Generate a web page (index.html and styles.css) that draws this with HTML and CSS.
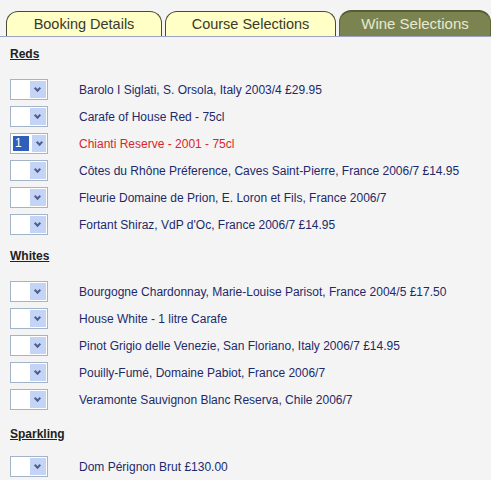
FILE: index.html
```html
<!DOCTYPE html>
<html lang="en">
<head>
<meta charset="UTF-8" />
<title>Wine Selections</title>
<link rel="stylesheet" href="styles.css">
</head>
<body>

<!-- Tab strip -->
<div class="tabs">
  <div class="tab">Booking Details</div>
  <div class="tab tab-course">Course Selections</div>
  <div class="tab tab-active">Wine Selections</div>
</div>

<div class="wines">
  <h3 class="group">Reds</h3>
  <div class="row"><span class="pick"><span class="val"></span><span class="arrow"></span></span>Barolo I Siglati, S. Orsola, Italy 2003/4 £29.95</div>
  <div class="row"><span class="pick"><span class="val"></span><span class="arrow"></span></span>Carafe of House Red - 75cl</div>
  <div class="row chosen"><span class="pick"><span class="val"><span class="num">1</span></span><span class="arrow"></span></span>Chianti Reserve - 2001 - 75cl</div>
  <div class="row"><span class="pick"><span class="val"></span><span class="arrow"></span></span>Côtes du Rhône Préference, Caves Saint-Pierre, France 2006/7 £14.95</div>
  <div class="row"><span class="pick"><span class="val"></span><span class="arrow"></span></span>Fleurie Domaine de Prion, E. Loron et Fils, France 2006/7</div>
  <div class="row"><span class="pick"><span class="val"></span><span class="arrow"></span></span>Fortant Shiraz, VdP d'Oc, France 2006/7 £14.95</div>

  <h3 class="group">Whites</h3>
  <div class="row"><span class="pick"><span class="val"></span><span class="arrow"></span></span>Bourgogne Chardonnay, Marie-Louise Parisot, France 2004/5 £17.50</div>
  <div class="row"><span class="pick"><span class="val"></span><span class="arrow"></span></span>House White - 1 litre Carafe</div>
  <div class="row"><span class="pick"><span class="val"></span><span class="arrow"></span></span>Pinot Grigio delle Venezie, San Floriano, Italy 2006/7 £14.95</div>
  <div class="row"><span class="pick"><span class="val"></span><span class="arrow"></span></span>Pouilly-Fumé, Domaine Pabiot, France 2006/7</div>
  <div class="row"><span class="pick"><span class="val"></span><span class="arrow"></span></span>Veramonte Sauvignon Blanc Reserva, Chile 2006/7</div>

  <h3 class="group group-last">Sparkling</h3>
  <div class="row"><span class="pick"><span class="val"></span><span class="arrow"></span></span>Dom Pérignon Brut £130.00</div>
</div>

</body>
</html>
```

FILE: styles.css
```css
body {
  margin: 0;
  background: #f4f4f4;
  font-family: "Liberation Sans", Arial, sans-serif;
}

/* Tabs */
.tabs {
  display: flex;
  align-items: flex-end;
  gap: 3px;
  padding: 10px 0 0 6px;
  border-bottom: 1px solid #9ea3c4;
  height: 26px;
}

.tab {
  box-sizing: border-box;
  height: 25px;
  width: 156px;
  padding-top: 4px;
  text-align: center;
  font-size: 14.5px;
  color: #3a3a2a;
  background: #ffffc6;
  border: 1px solid #4a4a3a;
  border-bottom: none;
  border-radius: 12px 12px 0 0;
}

.tab-course {
  width: 171px;
}

.tab-active {
  flex: 1;
  height: 26px;
  padding-top: 3px;
  font-size: 15px;
  color: #e6ead2;
  background: #7b8450;
  border-color: #5e6638;
  border-top: 2px solid #555d34;
}

/* Wine list */
.wines {
  padding: 0 0 0 10px;
}

.group {
  margin: 11px 0 14px;
  font-size: 12px;
  font-weight: bold;
  text-decoration: underline;
  color: #222;
  line-height: 15px;
}

.group:first-child {
  margin-top: 10px;
}

.group-last {
  margin: 14px 0 11px;
}

.row {
  display: flex;
  align-items: center;
  height: 27px;
  font-size: 12px;
  color: #1d2a6a;
}

.row.chosen {
  color: #d9262a;
}

/* Fake select box */
.pick {
  box-sizing: border-box;
  display: flex;
  width: 38px;
  height: 21px;
  margin-right: 31px;
  border: 1px solid #a4b4c8;
  background: #fff;
}

.val {
  flex: 1;
  padding: 2px;
}

.num {
  display: block;
  width: 14px;
  height: 15px;
  background: #2f5fb8;
  color: #fff;
  font-size: 12px;
  line-height: 15px;
  padding-left: 2px;
}

.arrow {
  position: relative;
  width: 16px;
  margin: 1px;
  background: #c4d4f6;
}

.arrow::after {
  content: "";
  position: absolute;
  left: 5px;
  top: 5px;
  width: 3px;
  height: 3px;
  border-right: 2px solid #4c5f8e;
  border-bottom: 2px solid #4c5f8e;
  transform: rotate(45deg);
}
```
